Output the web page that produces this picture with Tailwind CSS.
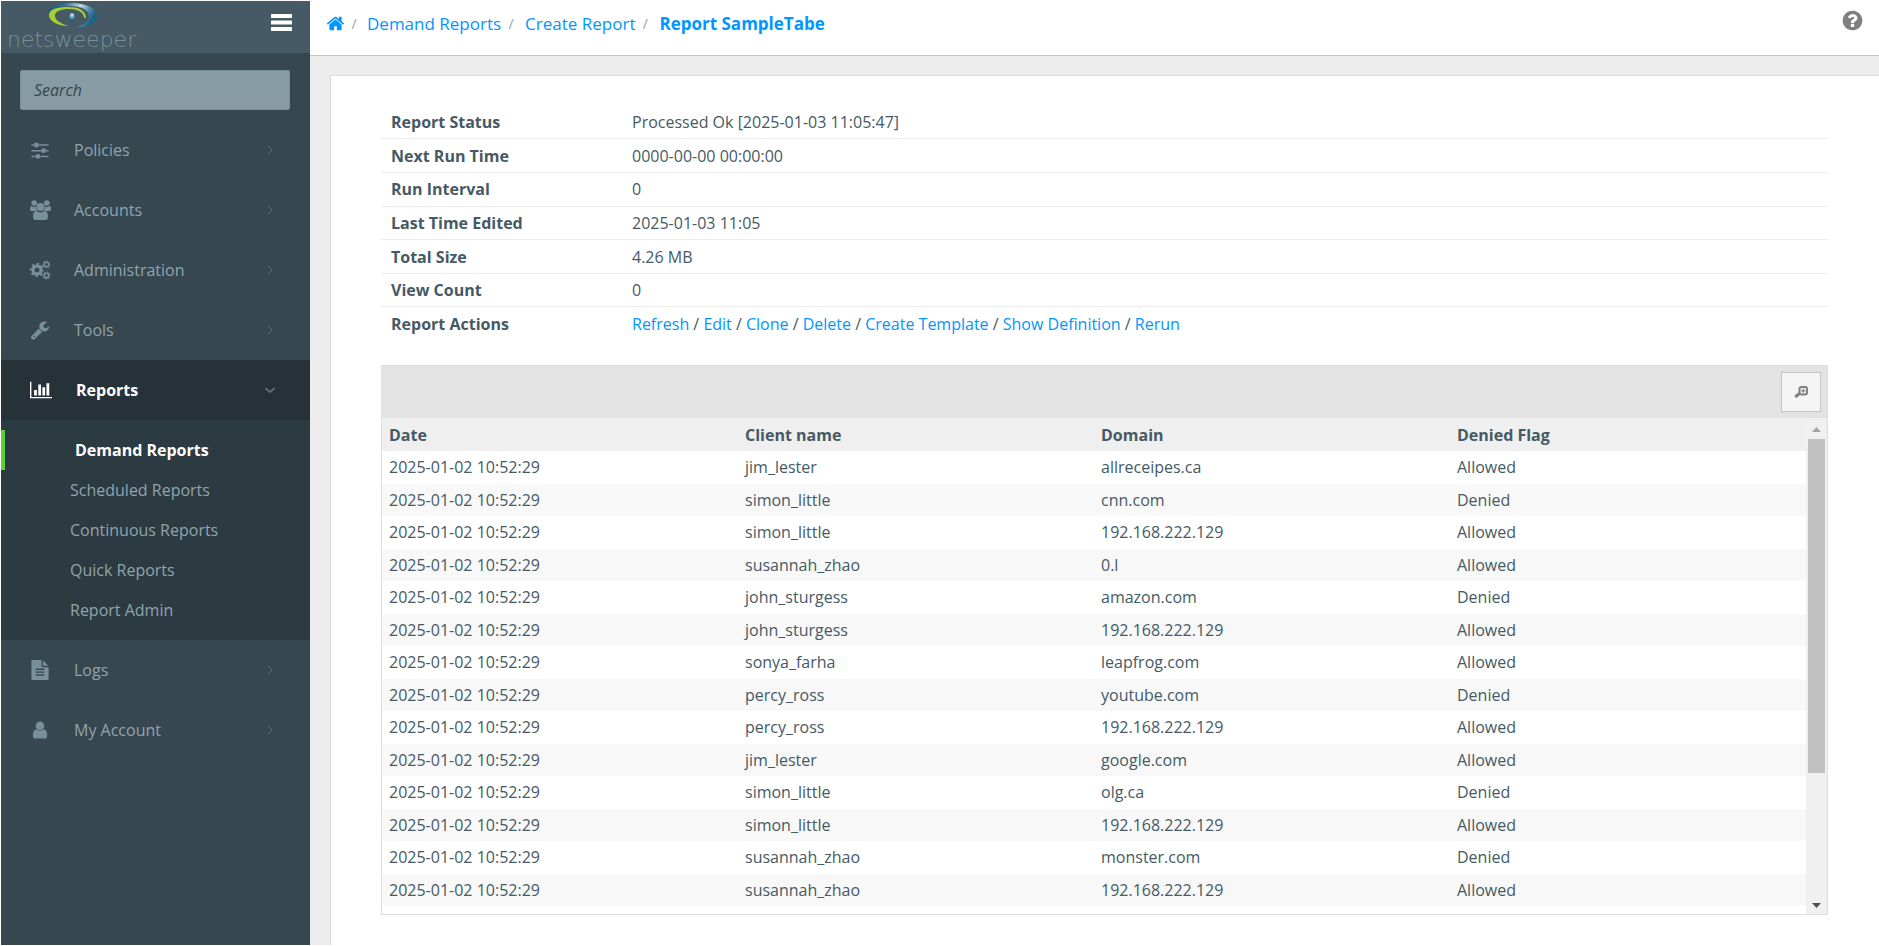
<!DOCTYPE html>
<html lang="en">
<head>
    <meta charset="UTF-8">
    <meta name="viewport" content="width=device-width, initial-scale=1.0">
    <title>Report SampleTabe - Netsweeper</title>
    <script src="https://cdn.jsdelivr.net/npm/@tailwindcss/browser@4"></script>
</head>
<body class="flex min-h-screen bg-white pt-px pl-px pb-px font-['Open_Sans','Noto_Sans',sans-serif] text-base text-[#455a64]">
    <!-- Sidebar -->
    <aside class="w-[309px] shrink-0 bg-[#37474f] text-[#90a4ae]">
        <div class="flex h-[52px] justify-between overflow-hidden bg-[#455a64] pl-[6px] pr-[18px]">
            <a href="#" class="flex flex-col items-center" aria-label="Netsweeper home">
                <svg class="h-[26px] w-[52px] shrink-0" viewBox="0 0 52 26">
                    <defs>
                        <linearGradient id="eye-ring" x1="0" y1="0" x2="1" y2="0.3">
                            <stop offset="0" stop-color="#0f5478"/>
                            <stop offset="0.35" stop-color="#2f7497"/>
                            <stop offset="0.65" stop-color="#c3d8e2"/>
                            <stop offset="0.85" stop-color="#4f8dab"/>
                            <stop offset="1" stop-color="#1d6487"/>
                        </linearGradient>
                        <radialGradient id="eye-pupil" cx="0.5" cy="0.25" r="0.7">
                            <stop offset="0" stop-color="#e8f4f9"/>
                            <stop offset="0.5" stop-color="#5a9ab8"/>
                            <stop offset="1" stop-color="#1b5c80"/>
                        </radialGradient>
                    </defs>
                    <path fill="url(#eye-ring)" fill-rule="evenodd" d="M1 14C1 6 12 2 25 2c14 0 26 5 26 13 0 7-10 12-24 12 10-2 16-6 16-12 0-6-8-10-19-10S3 8 1 14z"/>
                    <path fill="#a6ce39" d="M23 25C11 25 3 20 3 14S12 6 22 6c10 0 18 3 18 11h-2c0-6-7-9-15-9S9 10 9 15c0 4 6 8 14 10z"/>
                    <ellipse cx="26" cy="16" rx="3" ry="4" fill="url(#eye-pupil)"/>
                </svg>
                <span class="font-['DejaVu_Sans',sans-serif] text-[22px] leading-[26px] font-extralight text-[#78909c]">netsweeper</span>
            </a>
            <button type="button" aria-label="Toggle menu" class="flex h-[43px] items-center">
                <svg class="h-[17px] w-[21px]" viewBox="0 0 21 17" fill="#fff">
                    <rect width="21" height="4" rx="0.5"/>
                    <rect y="6.5" width="21" height="4" rx="0.5"/>
                    <rect y="13" width="21" height="4" rx="0.5"/>
                </svg>
            </button>
        </div>

        <div class="pt-[17px] pr-5 pb-[10px] pl-[19px]">
            <input type="text" id="menu-search" aria-label="Search" placeholder="Search" class="block h-10 w-full rounded-[2px] border border-[#78909c] bg-[#879ba4] px-[13px] text-base italic placeholder:text-[#37474f]">
        </div>

        <nav>
            <a href="#" class="flex h-[60px] items-center pl-[29px] pr-[35px]">
                <svg class="size-[20px]" viewBox="0 0 1792 1792" fill="#78909c"><path d="M480 1408v128h-352v-128h352zm352-128q26 0 45 19t19 45v256q0 26-19 45t-45 19h-256q-26 0-45-19t-19-45v-256q0-26 19-45t45-19h256zm160-384v128h-864v-128h864zm-640-512v128h-224v-128h224zm1312 1024v128h-736v-128h736zm-960-1152q26 0 45 19t19 45v256q0 26-19 45t-45 19h-256q-26 0-45-19t-19-45v-256q0-26 19-45t45-19h256zm640 512q26 0 45 19t19 45v256q0 26-19 45t-45 19h-256q-26 0-45-19t-19-45v-256q0-26 19-45t45-19h256zm320 128v128h-224v-128h224zm0-512v128h-864v-128h864z"/></svg>
                <span class="ml-6 grow">Policies</span>
                <svg class="size-[10px]" viewBox="0 0 10 10" fill="none" stroke="#546e7a"><path d="M3 1l4 4-4 4"/></svg>
            </a>
            <a href="#" class="flex h-[60px] items-center pl-[29px] pr-[35px]">
                <svg class="h-[20px] w-[21px]" viewBox="0 0 21 20" fill="#78909c">
                    <circle cx="4.2" cy="3" r="2.8"/>
                    <circle cx="16.8" cy="3" r="2.8"/>
                    <path d="M0 9.5C0 7 .6 6 1.6 6c1 1 3 1.200 4.400.5C6 8.500 6.500 9.800 7.300 11H2.200C.8 11 0 10.500 0 9.500zM21 9.500C21 7 20.400 6 19.400 6c-1 1-3 1.200-4.400.5 0 2-.5 3.300-1.300 4.500h5.100c1.400 0 2.200-.5 2.200-1.500z"/>
                    <circle cx="10.5" cy="7" r="4"/>
                    <path d="M3 17c0-4 1-6 3.600-6 1 .9 2.300 1.400 3.900 1.400s2.900-.5 3.900-1.400C17 11 18 13 18 17c0 1.900-1.100 3-2.800 3H5.800C4.100 20 3 18.900 3 17z"/>
                </svg>
                <span class="ml-[23px] grow">Accounts</span>
                <svg class="size-[10px]" viewBox="0 0 10 10" fill="none" stroke="#546e7a"><path d="M3 1l4 4-4 4"/></svg>
            </a>
            <a href="#" class="flex h-[60px] items-center pl-[29px] pr-[35px]">
                <svg class="h-[20px] w-[21px]" viewBox="0 0 21 20" fill="none" stroke="#78909c">
                    <circle cx="7" cy="10" r="4" stroke-width="3"/>
                    <circle cx="7" cy="10" r="6.200" stroke-width="1.800" stroke-dasharray="2.500 2.370" stroke-dashoffset="1.250"/>
                    <circle cx="16.500" cy="4.500" r="2.200" stroke-width="1.500"/>
                    <circle cx="16.500" cy="4.500" r="3.500" stroke-width="1.200" stroke-dasharray="1.400 1.350" stroke-dashoffset="0.7"/>
                    <circle cx="16.500" cy="15.500" r="2.200" stroke-width="1.500"/>
                    <circle cx="16.500" cy="15.500" r="3.500" stroke-width="1.200" stroke-dasharray="1.400 1.350" stroke-dashoffset="0.7"/>
                </svg>
                <span class="ml-[23px] grow">Administration</span>
                <svg class="size-[10px]" viewBox="0 0 10 10" fill="none" stroke="#546e7a"><path d="M3 1l4 4-4 4"/></svg>
            </a>
            <a href="#" class="flex h-[60px] items-center pl-[29px] pr-[35px]">
                <svg class="size-[20px]" viewBox="0 0 1792 1792" fill="#78909c"><path d="M448 1472q0-26-19-45t-45-19-45 19-19 45 19 45 45 19 45-19 19-45zm644-420l-682 682q-37 37-90 37-52 0-91-37l-106-108q-38-36-38-90 0-53 38-91l681-681q39 98 114.500 173.500t173.500 114.500zm634-435q0 39-23 106-47 134-164.500 217.500t-258.500 83.500q-185 0-316.500-131.500t-131.500-316.500 131.500-316.500 316.500-131.500q58 0 121.500 16.500t107.500 46.500q16 11 16 28t-16 28l-293 169v224l193 107q5-3 79-48.500t135.500-81 70.500-35.500q15 0 23.500 10t8.500 25z"/></svg>
                <span class="ml-6 grow">Tools</span>
                <svg class="size-[10px]" viewBox="0 0 10 10" fill="none" stroke="#546e7a"><path d="M3 1l4 4-4 4"/></svg>
            </a>

            <!-- Open section -->
            <a href="#" class="flex h-[60px] items-center bg-[#263238] pl-[29px] pr-[35px] font-bold text-white">
                <svg class="h-[20px] w-[22px]" viewBox="0 0 2048 1792" fill="#fff"><path d="M640 896v512h-256v-512h256zm384-512v1024h-256v-1024h256zm1024 1152v128h-2048v-1536h128v1408h1920zm-640-896v768h-256v-768h256zm384-384v1152h-256v-1152h256z"/></svg>
                <span class="ml-6 grow">Reports</span>
                <svg class="size-[10px]" viewBox="0 0 10 10" fill="none" stroke="#546e7a" stroke-width="2"><path d="M0 3l5 4 5-4"/></svg>
            </a>
            <ul class="bg-[#2c3a41] py-[10px] leading-10">
                <li><a href="#" class="block border-l-4 border-[#5fcf35] pl-[70px] font-bold text-white">Demand Reports</a></li>
                <li><a href="#" class="block pl-[69px]">Scheduled Reports</a></li>
                <li><a href="#" class="block pl-[69px]">Continuous Reports</a></li>
                <li><a href="#" class="block pl-[69px]">Quick Reports</a></li>
                <li><a href="#" class="block pl-[69px]">Report Admin</a></li>
            </ul>

            <a href="#" class="flex h-[60px] items-center pl-[29px] pr-[35px]">
                <svg class="size-[20px]" viewBox="0 0 1792 1792" fill="#78909c"><path d="M1596 476q14 14 28 36h-472v-472q22 14 36 28zm-476 164h544v1056q0 40-28 68t-68 28h-1344q-40 0-68-28t-28-68v-1600q0-40 28-68t68-28h800v544q0 40 28 68t68 28zm160 736v-64q0-14-9-23t-23-9h-704q-14 0-23 9t-9 23v64q0 14 9 23t23 9h704q14 0 23-9t9-23zm0-256v-64q0-14-9-23t-23-9h-704q-14 0-23 9t-9 23v64q0 14 9 23t23 9h704q14 0 23-9t9-23zm0-256v-64q0-14-9-23t-23-9h-704q-14 0-23 9t-9 23v64q0 14 9 23t23 9h704q14 0 23-9t9-23z"/></svg>
                <span class="ml-6 grow">Logs</span>
                <svg class="size-[10px]" viewBox="0 0 10 10" fill="none" stroke="#546e7a"><path d="M3 1l4 4-4 4"/></svg>
            </a>
            <a href="#" class="flex h-[60px] items-center pl-[29px] pr-[35px]">
                <svg class="size-[20px]" viewBox="0 0 1792 1792" fill="#78909c"><path d="M1536 1399q0 109-62.500 187t-150.500 78h-854q-88 0-150.500-78t-62.500-187q0-85 8.500-160.500t31.500-152 58.500-131 94-89 134.500-34.500q131 128 313 128t313-128q76 0 134.500 34.500t94 89 58.500 131 31.500 152 8.500 160.500zm-256-887q0 159-112.500 271.500t-271.500 112.500-271.500-112.500-112.500-271.500 112.500-271.500 271.500-112.500 271.500 112.500 112.500 271.500z"/></svg>
                <span class="ml-6 grow">My Account</span>
                <svg class="size-[10px]" viewBox="0 0 10 10" fill="none" stroke="#546e7a"><path d="M3 1l4 4-4 4"/></svg>
            </a>
        </nav>
    </aside>

    <!-- Main area -->
    <div class="flex min-w-0 grow flex-col bg-[#ededed]">
        <header class="flex h-[55px] items-start justify-between border-b border-[#c4c4c4] bg-white pl-4 pr-[15px]">
            <nav aria-label="Breadcrumb" class="flex h-[45px] items-center text-[17px] text-[#0096ff]">
                <a href="#" aria-label="Home"><svg class="size-[19px]" viewBox="0 0 1792 1792" fill="currentColor"><path d="M1472 992v480q0 26-19 45t-45 19h-384v-384h-256v384h-384q-26 0-45-19t-19-45v-480q0-1 .5-3t.5-3l575-474 575 474q1 2 1 6zm223-69l-62 74q-8 9-21 11h-3q-13 0-21-7l-692-577-692 577q-12 8-24 7-13-2-21-11l-62-74q-8-10-7-23.500t11-21.500l719-599q32-26 76-26t76 26l244 204v-195q0-14 9-23t23-9h192q14 0 23 9t9 23v408l219 182q10 8 11 21.500t-7 23.500z"/></svg></a>
                <span class="w-[22px] pr-1 text-center text-sm text-[#90a4ae]">/</span>
                <a href="#">Demand Reports</a>
                <span class="w-6 pr-1 text-center text-sm text-[#90a4ae]">/</span>
                <a href="#">Create Report</a>
                <span class="w-6 pr-1 text-center text-sm text-[#90a4ae]">/</span>
                <a href="#" class="font-bold">Report SampleTabe</a>
            </nav>
            <button type="button" aria-label="Help" class="mt-2">
                <svg class="size-[23px]" viewBox="0 0 1792 1792" fill="#808080"><path d="M1024 1376v-192q0-14-9-23t-23-9h-192q-14 0-23 9t-9 23v192q0 14 9 23t23 9h192q14 0 23-9t9-23zm256-672q0-88-55.500-163t-138.500-116-170-41q-243 0-371 213-15 24 8 42l132 100q7 6 19 6 16 0 25-12 53-68 86-92 34-24 86-24 48 0 85.500 26t37.500 59q0 38-20 61t-68 45q-63 28-115.500 86.500t-52.500 125.500v36q0 14 9 23t23 9h192q14 0 23-9t9-23q0-19 21.500-49.500t54.500-49.500q32-18 49-28.500t46-35 44.500-48 28-60.500 12.500-81zm384 192q0 209-103 385.500t-279.500 279.500-385.500 103-385.500-103-279.500-279.500-103-385.500 103-385.500 279.500-279.500 385.500-103 385.500 103 279.500 279.500 103 385.500z"/></svg>
            </button>
        </header>

        <main class="mt-[19px] ml-5 grow border-t border-l border-[#dcdcdc] bg-white pt-[30px] pr-[51px] pb-5 pl-[50px]">
            <!-- Report details -->
            <table class="h-[234px] w-full text-left [&_tr]:border-b [&_tr]:border-[#ececec] [&_tr:last-child]:border-0 [&_th]:w-[241px] [&_th]:pl-[10px] [&_td]:pl-[10px]">
                <tbody>
                    <tr><th scope="row">Report Status</th><td>Processed Ok [2025-01-03 11:05:47]</td></tr>
                    <tr><th scope="row">Next Run Time</th><td>0000-00-00 00:00:00</td></tr>
                    <tr><th scope="row">Run Interval</th><td>0</td></tr>
                    <tr><th scope="row">Last Time Edited</th><td>2025-01-03 11:05</td></tr>
                    <tr><th scope="row">Total Size</th><td>4.26 MB</td></tr>
                    <tr><th scope="row">View Count</th><td>0</td></tr>
                    <tr>
                        <th scope="row">Report Actions</th>
                        <td>
                            <a href="#" class="text-[#0096ff]">Refresh</a> /
                            <a href="#" class="text-[#0096ff]">Edit</a> /
                            <a href="#" class="text-[#0096ff]">Clone</a> /
                            <a href="#" class="text-[#0096ff]">Delete</a> /
                            <a href="#" class="text-[#0096ff]">Create Template</a> /
                            <a href="#" class="text-[#0096ff]">Show Definition</a> /
                            <a href="#" class="text-[#0096ff]">Rerun</a>
                        </td>
                    </tr>
                </tbody>
            </table>

            <!-- Report data -->
            <section class="mt-[25px] border border-[#dedede]">
                <div class="flex h-[52px] items-center justify-end bg-[#e3e3e3] pr-[6px]">
                    <button type="button" aria-label="Zoom in" class="flex size-10 items-center justify-center border border-[#c4c4c4] bg-[#f5f5f5]">
                        <svg class="h-[12px] w-[14px]" viewBox="0 0 14 12" fill="none" stroke="#808080">
                            <rect x="5.500" y="1" width="7.500" height="7.500" rx="2" stroke-width="2"/>
                            <path d="M5.500 7.500L1.200 11" stroke-width="3"/>
                            <path d="M9.300 2.800v4M7.300 4.800h4" stroke-width="1.300"/>
                        </svg>
                    </button>
                </div>
                <div class="flex h-[496px]">
                    <div class="grow overflow-hidden">
                        <table class="h-[488px] w-full table-fixed text-left [&_th]:pl-[7px] [&_td]:pl-[7px]">
                            <thead class="bg-[#efefef]">
                                <tr class="h-[33px]">
                                    <th scope="col">Date</th>
                                    <th scope="col">Client name</th>
                                    <th scope="col">Domain</th>
                                    <th scope="col">Denied Flag</th>
                                </tr>
                            </thead>
                            <tbody id="report-rows"></tbody>
                        </table>
                    </div>
                    <!-- Scrollbar -->
                    <div class="flex w-[21px] shrink-0 flex-col items-center bg-[#f0f0f0]">
                        <svg class="mt-[9px] h-[5px] w-[9px]" viewBox="0 0 9 5" fill="#a3a3a3"><path d="M4.500 0L9 5H0z"/></svg>
                        <div class="mt-[7px] h-[334px] w-[17px] bg-[#c1c1c1]"></div>
                        <svg class="mt-auto mb-[6px] h-[5px] w-[9px]" viewBox="0 0 9 5" fill="#505050"><path d="M0 0h9L4.500 5z"/></svg>
                    </div>
                </div>
            </section>
        </main>
    </div>

    <script>
        const rows = [
            ['jim_lester', 'allreceipes.ca', 'Allowed'],
            ['simon_little', 'cnn.com', 'Denied'],
            ['simon_little', '192.168.222.129', 'Allowed'],
            ['susannah_zhao', '0.l', 'Allowed'],
            ['john_sturgess', 'amazon.com', 'Denied'],
            ['john_sturgess', '192.168.222.129', 'Allowed'],
            ['sonya_farha', 'leapfrog.com', 'Allowed'],
            ['percy_ross', 'youtube.com', 'Denied'],
            ['percy_ross', '192.168.222.129', 'Allowed'],
            ['jim_lester', 'google.com', 'Allowed'],
            ['simon_little', 'olg.ca', 'Denied'],
            ['simon_little', '192.168.222.129', 'Allowed'],
            ['susannah_zhao', 'monster.com', 'Denied'],
            ['susannah_zhao', '192.168.222.129', 'Allowed'],
        ];

        document.getElementById('report-rows').innerHTML = rows.map(([client, domain, flag]) => `
            <tr class="even:bg-[#f8f8f8]">
                <td>2025-01-02 10:52:29</td>
                <td>${client}</td>
                <td>${domain}</td>
                <td>${flag}</td>
            </tr>`).join('');
    </script>
</body>
</html>
